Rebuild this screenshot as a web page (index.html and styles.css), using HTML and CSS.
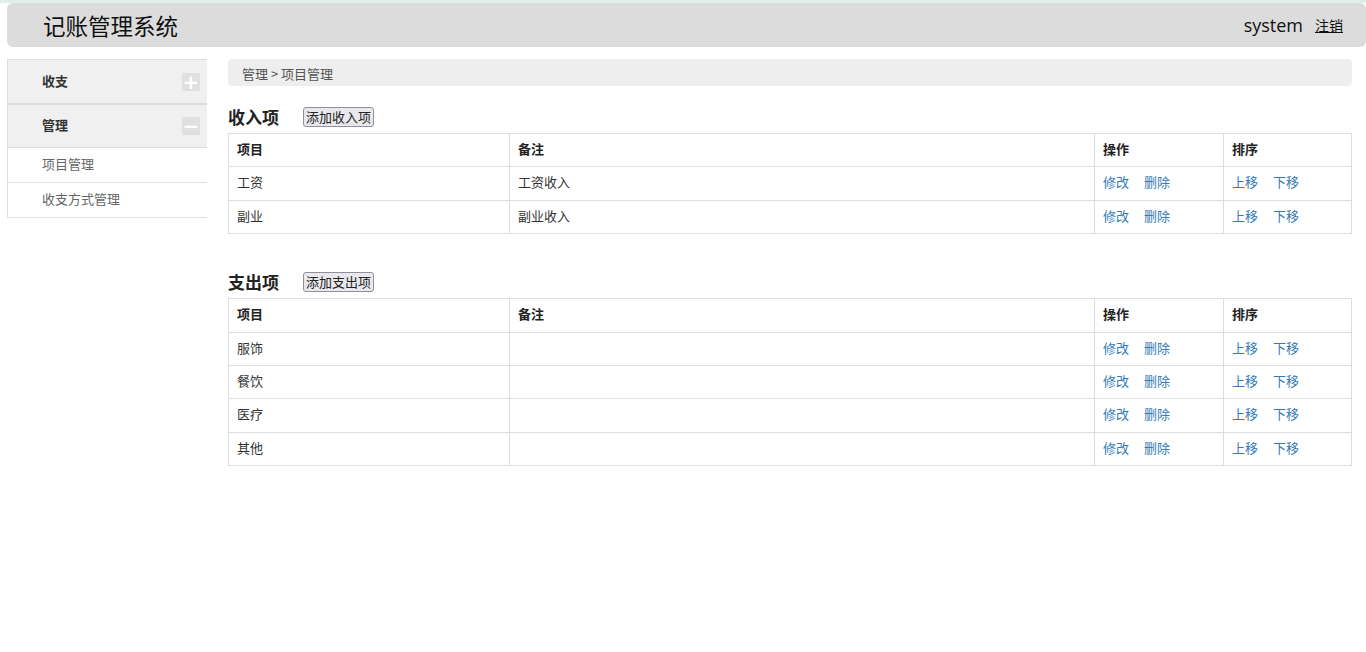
FILE: index.html
```html
<!DOCTYPE html>
<html lang="zh-CN">
<head>
    <meta charset="UTF-8">
    <title>记账管理系统</title>
    <link rel="stylesheet" href="styles.css">
</head>
<body>
    <div class="topline"></div>
    <div class="header">
        <div class="logo">记账管理系统</div>
        <div class="user">
            <span class="username">system</span>
            <a href="#" class="logout">注销</a>
        </div>
    </div>

    <div class="wrap">
        <div class="sidebar">
            <div class="menu-title">收支<span class="toggle">+</span></div>
            <div class="menu-title">管理<span class="toggle">&minus;</span></div>
            <a href="#" class="menu-item">项目管理</a>
            <a href="#" class="menu-item">收支方式管理</a>
        </div>

        <div class="main">
            <div class="crumb">管理 &gt; 项目管理</div>

            <div class="section-head">
                <h3>收入项</h3>
                <button>添加收入项</button>
            </div>
            <table>
                <tr>
                    <th class="c1">项目</th>
                    <th class="c2">备注</th>
                    <th class="c3">操作</th>
                    <th>排序</th>
                </tr>
                <tr>
                    <td>工资</td>
                    <td>工资收入</td>
                    <td><a href="#">修改</a><a href="#">删除</a></td>
                    <td><a href="#">上移</a><a href="#">下移</a></td>
                </tr>
                <tr>
                    <td>副业</td>
                    <td>副业收入</td>
                    <td><a href="#">修改</a><a href="#">删除</a></td>
                    <td><a href="#">上移</a><a href="#">下移</a></td>
                </tr>
            </table>

            <div class="section-head second">
                <h3>支出项</h3>
                <button>添加支出项</button>
            </div>
            <table>
                <tr>
                    <th class="c1">项目</th>
                    <th class="c2">备注</th>
                    <th class="c3">操作</th>
                    <th>排序</th>
                </tr>
                <tr>
                    <td>服饰</td>
                    <td></td>
                    <td><a href="#">修改</a><a href="#">删除</a></td>
                    <td><a href="#">上移</a><a href="#">下移</a></td>
                </tr>
                <tr>
                    <td>餐饮</td>
                    <td></td>
                    <td><a href="#">修改</a><a href="#">删除</a></td>
                    <td><a href="#">上移</a><a href="#">下移</a></td>
                </tr>
                <tr>
                    <td>医疗</td>
                    <td></td>
                    <td><a href="#">修改</a><a href="#">删除</a></td>
                    <td><a href="#">上移</a><a href="#">下移</a></td>
                </tr>
                <tr>
                    <td>其他</td>
                    <td></td>
                    <td><a href="#">修改</a><a href="#">删除</a></td>
                    <td><a href="#">上移</a><a href="#">下移</a></td>
                </tr>
            </table>
        </div>
    </div>
</body>
</html>
```

FILE: styles.css
```css
body {
    margin: 0;
    font-family: "Noto Sans CJK SC", "Open Sans", sans-serif;
    font-size: 13px;
    color: #333;
    background: #fff;
}

a {
    color: #337ab7;
    text-decoration: none;
}

.topline {
    height: 3px;
    background: #e0efe6;
}

.header {
    margin-left: 7px;
    height: 44px;
    background: #dcdcdc;
    border-radius: 6px;
    display: flex;
    align-items: center;
    justify-content: space-between;
    padding: 0 23px 0 36px;
}

.logo {
    font-size: 22.5px;
    color: #111;
}

.user {
    display: flex;
    align-items: center;
}

.username {
    font-family: "Open Sans", sans-serif;
    font-size: 18px;
    color: #111;
}

.logout {
    color: #111;
    text-decoration: underline;
    font-size: 14px;
    margin-left: 12px;
}

.wrap {
    display: flex;
    align-items: flex-start;
    gap: 21px;
    padding: 12px 14px 0 7px;
}

.sidebar {
    width: 200px;
    flex-shrink: 0;
    border-left: 1px solid #ddd;
    box-sizing: border-box;
}

.menu-title {
    height: 40px;
    padding: 0 7px 3px 34px;
    background: #f0f0f0;
    border-top: 1px solid #ddd;
    border-bottom: 1px solid #ddd;
    margin-bottom: -1px;
    display: flex;
    align-items: center;
    justify-content: space-between;
    font-weight: bold;
    color: #333;
}

.menu-title + .menu-title {
    border-top-width: 2px;
    height: 39px;
}

.toggle {
    width: 18px;
    height: 18px;
    margin-top: 3px;
    background: #e0e0e0;
    color: #fff;
    font-size: 20px;
    line-height: 18px;
    text-align: center;
    font-family: "DejaVu Sans", sans-serif;
    font-weight: bold;
}

.menu-item {
    display: block;
    height: 34px;
    line-height: 32px;
    padding-left: 34px;
    border-top: 1px solid #ddd;
    color: #666;
}

.menu-item:last-child {
    border-bottom: 1px solid #ddd;
}

.main {
    flex: 1;
}

.crumb {
    height: 27px;
    line-height: 29px;
    background: #eee;
    border-radius: 4px;
    padding-left: 14px;
    color: #555;
}

.section-head {
    display: flex;
    align-items: center;
    margin: 21px 0 6px;
}

.section-head.second {
    margin-top: 38px;
}

.section-head h3 {
    margin: 0;
    font-size: 17px;
    line-height: 20px;
    font-weight: bold;
    color: #222;
}

.section-head button {
    margin-left: 24px;
    font-family: "Noto Sans CJK SC", sans-serif;
    font-size: 13px;
    height: 20px;
    padding: 0 2px;
    line-height: 18px;
    color: #222;
    background: #e9e9ed;
    border: 1px solid #8f8f9d;
    border-radius: 3px;
}

table {
    width: 100%;
    border-collapse: collapse;
    border: 1px solid #ddd;
}

th, td {
    border: 1px solid #ddd;
    padding: 6px 8px 8px;
    line-height: 18.4px;
    text-align: left;
}

th {
    font-weight: bold;
    color: #222;
}

.c1 { width: 264px; }
.c2 { width: 568px; }
.c3 { width: 112px; }

td a {
    margin-right: 15px;
}
```
